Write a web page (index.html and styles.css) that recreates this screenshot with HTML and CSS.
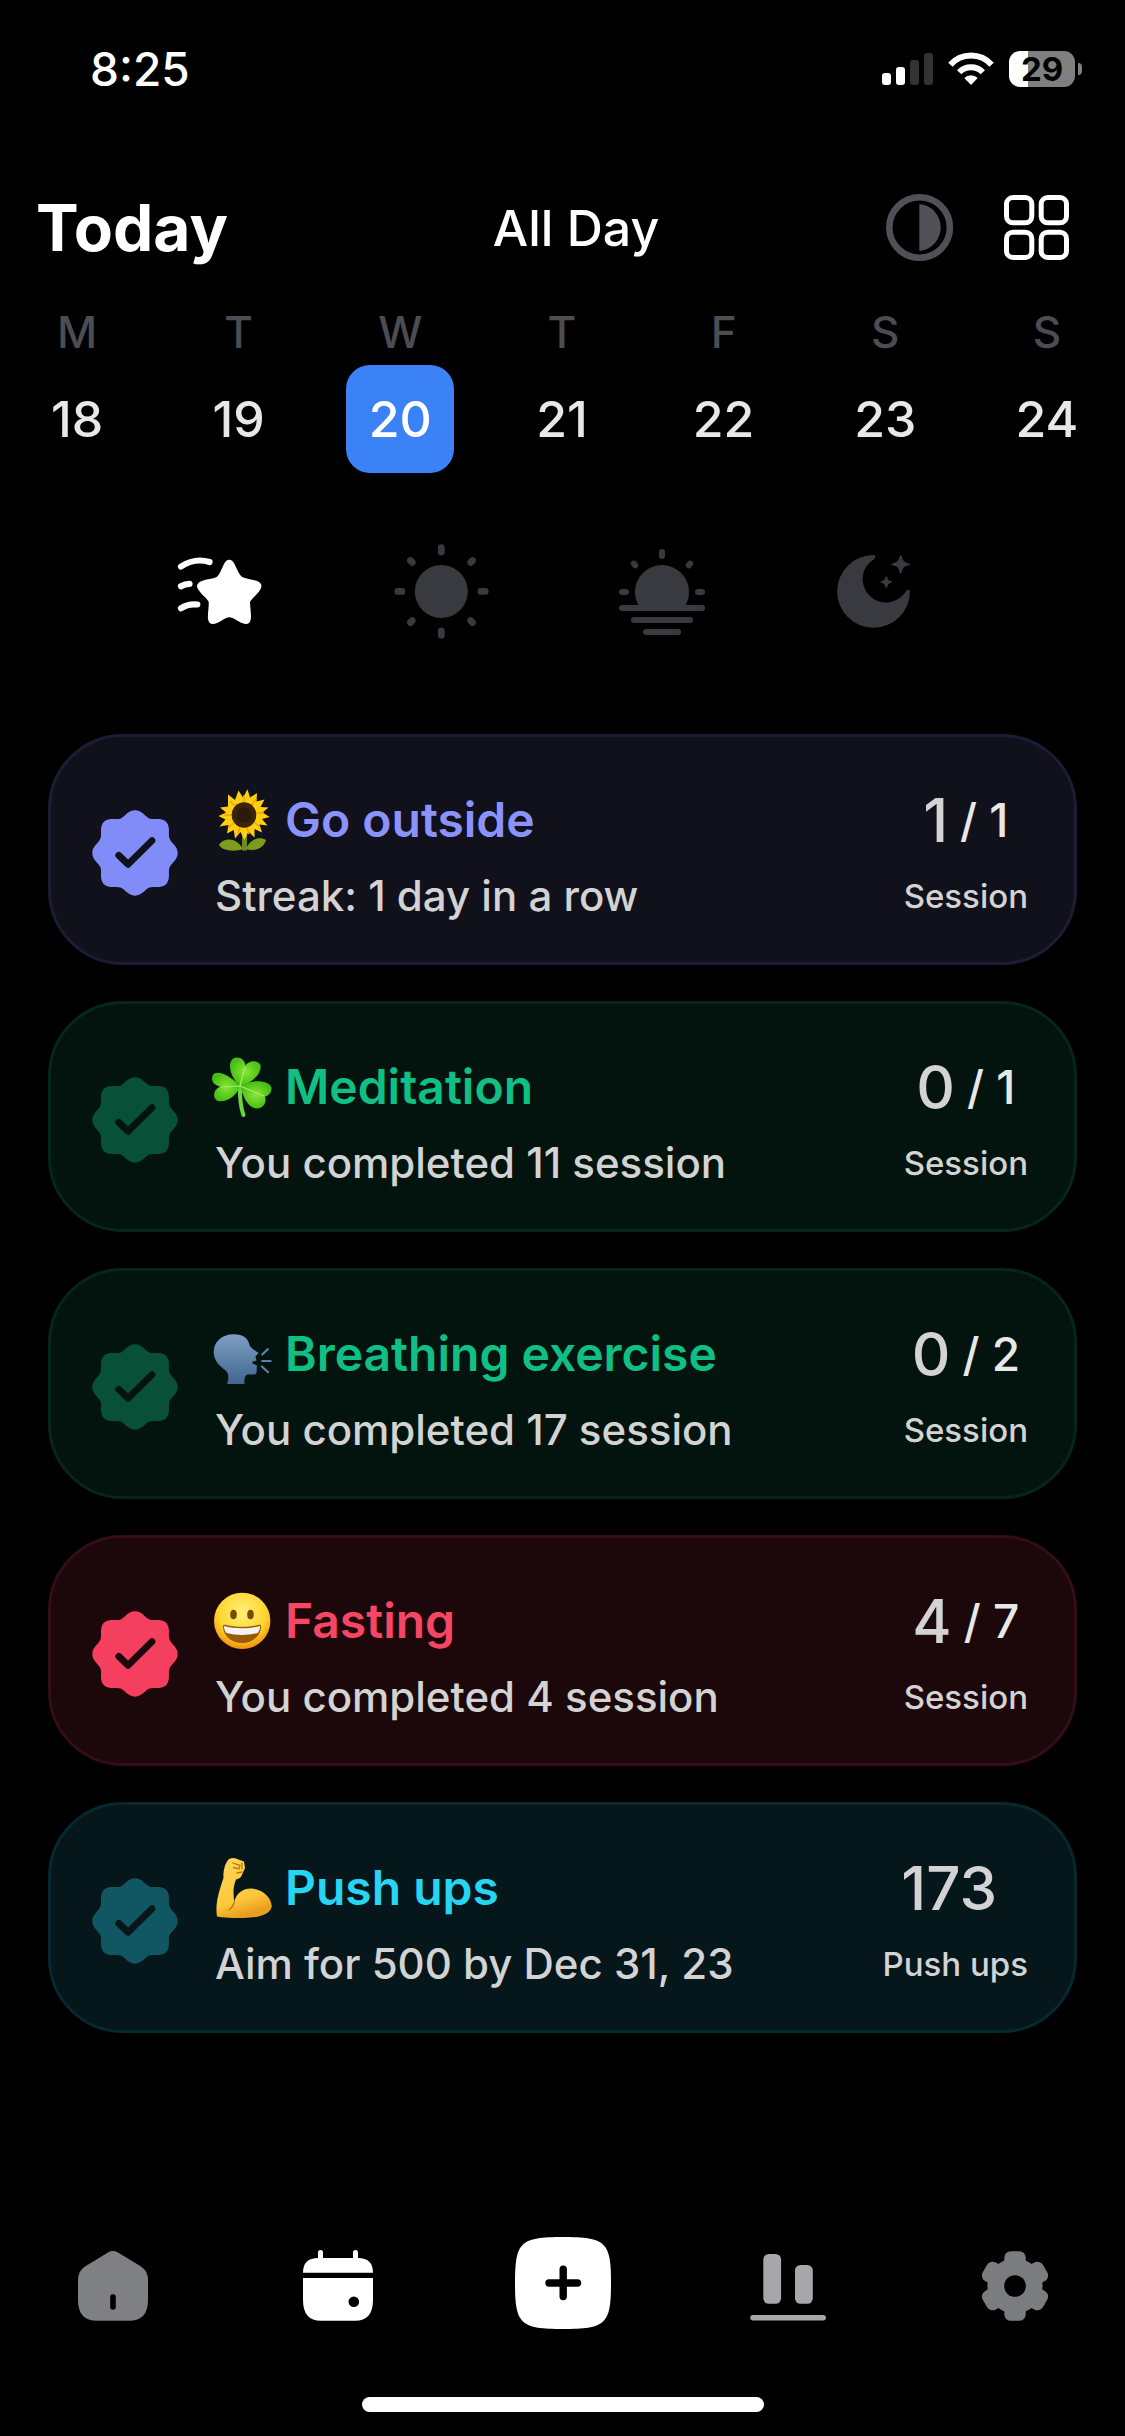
FILE: index.html
```html
<!DOCTYPE html>
<html lang="en">
<head>
<meta charset="utf-8">
<meta name="viewport" content="width=device-width, initial-scale=1">
<title>Today</title>
<link rel="stylesheet" href="styles.css">
</head>
<body>
<svg class="defs" aria-hidden="true">
  <symbol id="seal" viewBox="-43 -43 86 86">
    <path fill="currentColor" d="M42.7 0C42.7 7 36.5 9.8 34.6 14.3C32.7 19 36 25.5 31.2 31.2C25.5 36 19 32.7 14.3 34.6C9.8 36.5 7 42.7 0 42.7C-7 42.7-9.8 36.5-14.3 34.6C-19 32.7-25.5 36-31.2 31.2C-36 25.5-32.7 19-34.6 14.3C-36.5 9.8-42.7 7-42.7 0C-42.7-7-36.5-9.8-34.6-14.3C-32.7-19-36-25.5-31.2-31.2C-25.5-36-19-32.7-14.3-34.6C-9.8-36.5-7-42.7 0-42.7C7-42.7 9.8-36.5 14.3-34.6C19-32.7 25.5-36 31.2-31.2C36-25.5 32.7-19 34.6-14.3C36.5-9.8 42.7-7 42.7 0Z"/>
    <path class="tick" d="M-16.3 2.3L-7 11.3L17-12.3"/>
  </symbol>
</svg>

<div class="status">
  <span class="clock">8:25</span>
  <div class="indicators">
    <svg width="51" height="32" viewBox="882 53 51 32" aria-label="Signal"><g fill="#fff"><rect x="882" y="73" width="9" height="12" rx="3"/><rect x="896" y="67" width="9" height="18" rx="3"/></g><g fill="#333"><rect x="910" y="60" width="9" height="25" rx="3"/><rect x="924" y="53" width="9" height="32" rx="3"/></g></svg>
    <svg width="46" height="34" viewBox="948 52 46 34" aria-label="Wi-Fi"><g fill="none" stroke="#fff" stroke-width="6"><path d="M950.4 64.8A27.7 27.7 0 0 1 991.6 64.8"/><path d="M959.2 72.3A16.3 16.3 0 0 1 982.8 72.3"/></g><path fill="#fff" d="M971 85L964.3 78A9.5 9.5 0 0 1 977.7 78Z"/></svg>
    <div class="battery"><span class="level">29</span><span class="nub"></span></div>
  </div>
</div>

<header class="header">
  <h1 class="title">Today</h1>
  <button class="range">All Day</button>
  <div class="actions">
    <button class="icon-btn muted" aria-label="Contrast"><svg width="72" height="72" viewBox="884 192 72 72"><circle cx="919.6" cy="227.5" r="30.3" fill="none" stroke="currentColor" stroke-width="6.6"/><path fill="currentColor" d="M919.3 204A23.6 23.6 0 0 1 919.3 251Z"/></svg></button>
    <button class="icon-btn" aria-label="Categories"><svg width="72" height="72" viewBox="1001 192 72 72" fill="none" stroke="currentColor" stroke-width="5"><rect x="1006.5" y="197.5" width="25.3" height="25.3" rx="6.5"/><rect x="1041.2" y="197.5" width="25.3" height="25.3" rx="6.5"/><rect x="1006.5" y="232.2" width="25.3" height="25.3" rx="6.5"/><rect x="1041.2" y="232.2" width="25.3" height="25.3" rx="6.5"/></svg></button>
  </div>
</header>

<div class="week">
  <button class="day"><span class="weekday">M</span><span class="date">18</span></button>
  <button class="day"><span class="weekday">T</span><span class="date">19</span></button>
  <button class="day selected"><span class="weekday">W</span><span class="date">20</span></button>
  <button class="day"><span class="weekday">T</span><span class="date">21</span></button>
  <button class="day"><span class="weekday">F</span><span class="date">22</span></button>
  <button class="day"><span class="weekday">S</span><span class="date">23</span></button>
  <button class="day"><span class="weekday">S</span><span class="date">24</span></button>
</div>

<div class="periods">
  <button class="period active" aria-label="All day"><svg width="96" height="96" viewBox="172 543 96 96"><path fill="currentColor" d="M223.5 565C226.5 558 232 558 235 565C237.5 570 239 574.5 242 577C246 579 252 579 257 581C262 583 262.5 586.5 260 590C257 595 252 598 250 602C250 607 251.5 614 250.8 619C250 624 247 625 242 623C237 621 234 617.8 229.3 617.3C225 617.8 222 621 217 623C212 625 208.7 624 208 619C207.5 614 209 607 208.7 602C207 598 201.7 595 198.7 590C196 586.5 196.5 583 201.7 581C206.7 579 212.7 579 216.7 577C219.7 574.5 221 570 223.5 565Z"/><g fill="none" stroke="currentColor" stroke-width="6.2" stroke-linecap="round"><path d="M181 566.5Q195 557.5 209.5 562"/><path d="M181 586.3Q185 584 189.5 583.8"/><path d="M181 608.3Q188 603.5 197.3 604.5"/></g></svg></button>
  <button class="period" aria-label="Day"><svg width="96" height="96" viewBox="393 543 96 96"><circle cx="441.3" cy="591.4" r="26.5" fill="currentColor"/><path fill="none" stroke="currentColor" stroke-width="6.8" stroke-linecap="round" d="M441.3 547.6V552M441.3 631V635.2M397.8 591.4H402M481 591.4H485.2M410.4 560.5L412.2 562.3M472.5 560.5L470.7 562.3M410.4 622.5L412.2 620.7M472.5 622.5L470.7 620.7"/></svg></button>
  <button class="period" aria-label="Evening"><svg width="96" height="96" viewBox="614 543 96 96"><path fill="currentColor" d="M638.6 605.5A27 27 0 1 1 685.4 605.5L688 609H636Z"/><path fill="none" stroke="currentColor" stroke-width="6" stroke-linecap="round" d="M662 552V556M622 592H626M698 592H702M633.8 563.6L635.2 565.2M690.2 563.6L688.8 565.2M622 608H702M634 620H690M646 632H678"/></svg></button>
  <button class="period" aria-label="Night"><svg width="96" height="96" viewBox="835 543 96 96" fill="currentColor"><path d="M873.5 555A36.4 36.4 0 1 0 909.9 591.5C910 589.5 907.5 589 906 591.3A23.4 23.4 0 1 1 874.3 558.9C876 557 875.5 555 873.5 555Z"/><path stroke="currentColor" stroke-width="1.5" stroke-linejoin="round" d="M900.7 556C902.6 562.3 902.8 562.5 909.3 564.4C902.8 566.3 902.6 566.5 900.7 573C898.8 566.5 898.6 566.3 892.1 564.4C898.6 562.5 898.8 562.3 900.7 556ZM886.3 577C887.5 580.8 887.6 580.9 891.4 582.1C887.6 583.3 887.5 583.4 886.3 587.2C885.1 583.4 885 583.3 881.2 582.1C885 580.9 885.1 580.8 886.3 577Z"/></svg></button>
</div>

<main class="habits">
  <article class="card indigo">
    <button class="badge" aria-label="Go outside done" aria-pressed="true"><svg width="86" height="86"><use href="#seal"/></svg></button>
    <div class="info">
      <h2 class="name"><svg width="62" height="64" viewBox="212 787 62 64" aria-hidden="true">
        <path d="M244.5 830V849.5" stroke="#6f8a24" stroke-width="5"/>
        <path fill="#7b9c1d" d="M243 848C235 851 222 850 219 844C223 837 236 835 243 848ZM246 848C251 836 261 836 266 839C264 847 255 851 246 848Z"/>
        <path fill="#ffd012" d="M247.5 788.3L250 796.5L257 792L256.5 800.5L264.5 798.5L260.5 806L268.5 806.5L262.5 811.5L269.7 816L262 818L267.5 824.5L259.5 823.5L262 831.5L254.5 828L254.5 836.5L248.5 830.5L244.5 839L240.5 831L235 837.5L233.8 829L227 832.5L228.5 824L219.5 825.5L225.5 818.5L218.5 815L226 811.5L220 806.5L228 805.5L228 793.5L235 799L238.5 789.5L243 796.5Z"/>
        <path fill="none" stroke="#f0a30a" stroke-width="1.5" d="M244 801V794M252 804L256 798M256 812H264M254 821L260 826M247 826L249 833M240 826L238 833M234 822L228 827M232 814H224M235 805L230 800"/>
        <ellipse cx="244" cy="814" rx="12.3" ry="12.7" fill="#3b2408"/><ellipse cx="244" cy="814" rx="7" ry="7.5" fill="#2a1a08"/>
      </svg><span>Go outside</span></h2>
      <p class="detail">Streak: 1 day in a row</p>
    </div>
    <div class="progress"><p class="count"><span class="done">1</span><span class="goal">/ 1</span></p><p class="unit">Session</p></div>
  </article>

  <article class="card green pending">
    <button class="badge" aria-label="Meditation done" aria-pressed="false"><svg width="86" height="86"><use href="#seal"/></svg></button>
    <div class="info">
      <h2 class="name"><svg width="62" height="64" viewBox="212 1054 62 64" aria-hidden="true">
        <defs><radialGradient id="leaf"><stop offset="0" stop-color="#8be33b"/><stop offset="1" stop-color="#45bf12"/></radialGradient></defs>
        <path fill="none" stroke="#6fd23f" stroke-width="4" stroke-linecap="round" d="M240 1086Q239.5 1103 243.5 1114"/>
        <g fill="url(#leaf)"><path d="M240 1085C228 1074 227 1058 236 1056.5C242 1055.5 245.5 1061 245.5 1064.5C248 1060 257 1058 260.5 1064C262 1073 252 1082 240 1085Z"/><path d="M240 1085C234 1077 217 1067 213 1074C210 1081 215 1084 220 1085.5C213 1089 212 1097 218 1100C226 1102 237 1095 240 1085Z"/><path d="M240 1085C252 1078 270 1079 271.5 1087C272 1092 268 1095 265 1095.5C267 1100 264 1108 256 1107.5C247 1106 243 1095 240 1085Z"/></g>
        <path fill="none" stroke="#a5f060" stroke-width="1.2" d="M240 1085L245 1066M240 1085L221 1086M240 1085L264 1095"/>
      </svg><span>Meditation</span></h2>
      <p class="detail">You completed 11 session</p>
    </div>
    <div class="progress"><p class="count"><span class="done">0</span><span class="goal">/ 1</span></p><p class="unit">Session</p></div>
  </article>

  <article class="card green pending">
    <button class="badge" aria-label="Breathing exercise done" aria-pressed="false"><svg width="86" height="86"><use href="#seal"/></svg></button>
    <div class="info">
      <h2 class="name"><svg width="62" height="64" viewBox="212 1321 62 64" aria-hidden="true">
        <defs><linearGradient id="head" x2="0" y2="1"><stop offset="0" stop-color="#7d9fc4"/><stop offset="1" stop-color="#41658f"/></linearGradient></defs>
        <path fill="url(#head)" d="M234 1333.3C222 1333 213.7 1341 213.7 1351C213.7 1360 220 1365 225 1369C229 1372 229 1377 227 1383H244.5C244 1378 245 1373.5 248 1373.5H254C256.5 1373.5 257 1371 256.6 1368L257 1364.5L252.5 1362.5V1360.5L256.6 1359.5L255.4 1355.5L258.6 1352C255.5 1349.5 250.5 1347 249.5 1344C248 1337 243 1333.4 234 1333.3Z"/>
        <path fill="none" stroke="#5784b0" stroke-width="2.2" d="M261.7 1354L268.5 1347.5M261.3 1360H271.5M261.3 1365L268.7 1371.8"/>
      </svg><span>Breathing exercise</span></h2>
      <p class="detail">You completed 17 session</p>
    </div>
    <div class="progress"><p class="count"><span class="done">0</span><span class="goal">/ 2</span></p><p class="unit">Session</p></div>
  </article>

  <article class="card rose">
    <button class="badge" aria-label="Fasting done" aria-pressed="true"><svg width="86" height="86"><use href="#seal"/></svg></button>
    <div class="info">
      <h2 class="name"><svg width="62" height="64" viewBox="212 1588 62 64" aria-hidden="true">
        <defs><radialGradient id="face" cx="0.5" cy="0.35" r="0.66"><stop offset="0" stop-color="#fff07a"/><stop offset="0.65" stop-color="#ffd52e"/><stop offset="1" stop-color="#f08c0b"/></radialGradient></defs>
        <circle cx="242.2" cy="1619.9" r="28.2" fill="url(#face)"/>
        <g fill="#7a4a05"><ellipse cx="233.5" cy="1613.5" rx="3.3" ry="4.7"/><ellipse cx="250.5" cy="1613.5" rx="3.3" ry="4.7"/></g>
        <path fill="#9a5b06" d="M222.8 1625.5C223 1623.5 224.5 1623.6 226 1624C236 1626.4 248 1626.4 258 1624C259.5 1623.6 261.2 1623.5 261.2 1625.5C260 1637 251 1642 242 1642S224 1637 222.8 1625.5Z"/>
        <path fill="#f4f4f6" d="M223.8 1625C235 1628 249 1628 260.2 1625C260 1628 259 1630.5 257.5 1632C248 1634.5 236 1634.5 226.5 1632C225 1630.5 224 1628 223.8 1625Z"/>
      </svg><span>Fasting</span></h2>
      <p class="detail">You completed 4 session</p>
    </div>
    <div class="progress"><p class="count"><span class="done">4</span><span class="goal">/ 7</span></p><p class="unit">Session</p></div>
  </article>

  <article class="card cyan pending">
    <button class="badge" aria-label="Push ups done" aria-pressed="false"><svg width="86" height="86"><use href="#seal"/></svg></button>
    <div class="info">
      <h2 class="name"><svg width="62" height="64" viewBox="212 1855 62 64" aria-hidden="true">
        <defs><linearGradient id="arm" x2="0.3" y2="1"><stop offset="0" stop-color="#ffd557"/><stop offset="0.75" stop-color="#ffc83c"/><stop offset="1" stop-color="#e9a01f"/></linearGradient></defs>
        <path fill="url(#arm)" d="M229 1858C232 1856.5 235 1856.8 237 1858L244 1860.5L245 1867L241.5 1875C240 1877.5 238 1878 236 1878.5C233 1886 233 1893 234.5 1901C236 1892 243 1887.5 251 1887.5C262 1888 271 1896 271.8 1905C271 1912 262 1916 250 1916.5C238 1917.5 225 1917 217 1915.5C215 1903 219 1890 223.5 1877C223 1870 225 1862 229 1858Z"/>
        <path fill="none" stroke="#b9770e" stroke-width="1.3" stroke-linecap="round" d="M233 1862L240 1864.5L239 1868L233.5 1866.5M242 1862V1868M237 1872L242 1871M234.5 1901Q233 1906 229 1909"/>
      </svg><span>Push ups</span></h2>
      <p class="detail">Aim for 500 by Dec 31, 23</p>
    </div>
    <div class="progress"><p class="count"><span class="done">173</span><span class="goal"></span></p><p class="unit">Push ups</p></div>
  </article>
</main>

<nav class="tabs">
  <a class="tab" href="#home" aria-label="Home"><svg width="96" height="96" viewBox="65 2235 96 96"><path fill="#7f8084" d="M108 2252.4Q113 2249.5 118 2252.4L141 2266.5Q148 2271 148 2280V2300Q148 2320.8 129 2320.8H97Q78 2320.8 78 2300V2280Q78 2271 85 2266.5Z"/><path stroke="#000" stroke-width="5.6" stroke-linecap="round" d="M113 2297V2307"/></svg></a>
  <a class="tab" href="#calendar" aria-label="Calendar"><svg width="96" height="96" viewBox="290 2235 96 96"><path fill="#fff" d="M303 2272.7Q303 2258 318 2258H358Q373 2258 373 2272.7ZM303 2278H373V2300Q373 2320.8 355 2320.8H321Q303 2320.8 303 2300Z"/><path stroke="#fff" stroke-width="5" stroke-linecap="round" d="M320.5 2252.5V2262M355.5 2252.5V2262"/><circle cx="353.8" cy="2301.7" r="5.3"/></svg></a>
  <a class="tab" href="#add" aria-label="Add"><svg width="96" height="96" viewBox="515 2235 96 96"><path fill="#fff" d="M515 2283C515 2242 520 2237 563 2237S611 2242 611 2283S606 2329 563 2329S515 2324 515 2283Z"/><path stroke="#000" stroke-width="7.4" stroke-linecap="round" d="M549 2283H577.5M563.2 2269.3V2296.5"/></svg></a>
  <a class="tab" href="#stats" aria-label="Statistics"><svg width="96" height="96" viewBox="740 2235 96 96" fill="#a6a7a9"><rect x="763.3" y="2254" width="17.8" height="49.8" rx="5.5"/><rect x="795" y="2265" width="17.8" height="38.8" rx="5.5"/><rect x="750.3" y="2315" width="75.6" height="5.4" rx="2.7"/></svg></a>
  <a class="tab" href="#settings" aria-label="Settings"><svg width="96" height="96" viewBox="-50 -51 96 96" fill="#7b7c80"><circle r="27.6"/><rect id="tooth" x="-10.7" y="-34.8" width="21.4" height="69.6" rx="6.5"/><use href="#tooth" transform="rotate(60)"/><use href="#tooth" transform="rotate(120)"/><circle r="10.8" fill="#000"/></svg></a>
</nav>
<div class="home-bar"></div>
</body>
</html>
```

FILE: styles.css
```css
* { box-sizing: border-box; }

body {
  margin: 0;
  min-height: 100vh;
  display: flex;
  flex-direction: column;
  background: #000;
  color: #fff;
  font-family: Inter, "Liberation Sans", sans-serif;
  font-weight: 500;
}

h1, h2, p { margin: 0; }
svg { display: block; flex: none; }

button {
  padding: 0;
  border: 0;
  background: none;
  color: inherit;
  font: inherit;
  cursor: pointer;
}

.defs { position: absolute; width: 0; height: 0; }

.status {
  display: flex;
  justify-content: space-between;
  align-items: center;
  padding: 51px 43px 0 90px;
}
.clock { font-size: 46px; line-height: 36px; }
.indicators { display: flex; align-items: center; gap: 15px; }
.battery { display: flex; align-items: center; gap: 3px; }
.level {
  width: 66px;
  border-radius: 11px;
  background: linear-gradient(90deg, #fff 19px, #808080 19px);
  color: #000;
  font-size: 33px;
  font-weight: 700;
  line-height: 36px;
  text-align: center;
}
.nub { width: 4px; height: 12px; border-radius: 0 4px 4px 0; background: #808080; }

.header {
  display: flex;
  align-items: center;
  margin-top: 105px;
  padding: 0 52px 0 36px;
}
.title { min-width: 232px; font-size: 64px; font-weight: 700; line-height: 72px; }
.range { flex: 1; font-size: 50px; line-height: 72px; text-align: center; }
.actions { display: flex; gap: 45px; }
.muted { color: #4f5156; }

.week {
  display: flex;
  justify-content: space-between;
  margin-top: 42px;
  padding: 0 24px 0 23px;
}
.day { display: flex; flex-direction: column; gap: 7px; width: 108px; text-align: center; }
.weekday { width: 100%; color: #4b4d52; font-size: 44px; line-height: 52px; }
.date { width: 100%; border-radius: 24px; color: #e8e8e8; font-size: 50px; line-height: 108px; }
.selected .date { background: #3b82f6; color: #fff; }

.periods {
  display: flex;
  justify-content: space-between;
  margin-top: 70px;
  padding: 0 194px 0 172px;
}
.period { color: #383a3f; }
.active { color: #fff; }

.habits {
  display: flex;
  flex-direction: column;
  gap: 36px;
  margin-top: 95px;
  padding: 0 48px;
}
.card {
  display: flex;
  align-items: center;
  gap: 34px;
  padding: 51px 46px 40px 41px;
  border: 3px solid var(--edge);
  border-radius: 75px;
  background: var(--fill);
}
.indigo { --fill: #11111c; --edge: #1b1d35; --seal: #818cf8; --name: #8b93fb; }
.green { --fill: #03130e; --edge: #06261c; --seal: #095038; --name: #10bf85; }
.rose { --fill: #1c080b; --edge: #330d17; --seal: #f43f5e; --name: #f74663; }
.cyan { --fill: #05171b; --edge: #06282f; --seal: #105763; --name: #26d5f2; }

.badge { padding-bottom: 4px; color: var(--seal); }
.tick { fill: none; stroke: var(--fill); stroke-width: 6.8; stroke-linecap: round; stroke-linejoin: round; }

.info { flex: 1; display: flex; flex-direction: column; gap: 18px; }
.name {
  display: flex;
  align-items: center;
  gap: 11px;
  color: var(--name);
  font-size: 48px;
  font-weight: 600;
  line-height: 64px;
}
.detail { padding-left: 3px; color: #d3d3d3; font-size: 42px; line-height: 52px; }

.progress { display: flex; flex-direction: column; align-items: center; gap: 18px; }
.count { display: flex; align-items: center; gap: 12px; line-height: 64px; }
.done { color: #d3d3d3; font-size: 60px; }
.goal { color: #e8e8e8; font-size: 46px; }
.unit { color: #d3d3d3; font-size: 33px; line-height: 52px; }

.tabs {
  display: grid;
  grid-template-columns: repeat(5, 1fr);
  justify-items: center;
  margin-top: auto;
}
.home-bar {
  align-self: center;
  width: 402px;
  height: 15px;
  margin: 66px 0 24px;
  border-radius: 8px;
  background: #fff;
}
```
